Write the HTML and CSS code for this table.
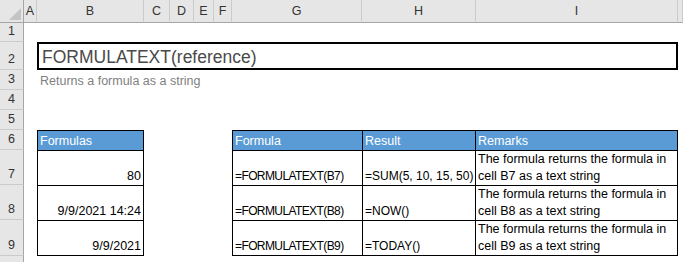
FILE: index.html
```html
<!DOCTYPE html>
<html lang="en">
<head>
  <meta charset="UTF-8">
  <meta name="viewport" content="width=device-width, initial-scale=1.0">
  <title>FORMULATEXT</title>
  <link rel="stylesheet" href="styles.css">
</head>
<body>
  <div class="sheet">
    <!-- column letters -->
    <div class="corner"></div>
    <div class="col-head">A</div>
    <div class="col-head">B</div>
    <div class="col-head">C</div>
    <div class="col-head">D</div>
    <div class="col-head">E</div>
    <div class="col-head">F</div>
    <div class="col-head">G</div>
    <div class="col-head">H</div>
    <div class="col-head">I</div>
    <div class="col-head"></div>

    <!-- row numbers -->
    <div class="row-head">1</div>
    <div class="row-head">2</div>
    <div class="row-head">3</div>
    <div class="row-head">4</div>
    <div class="row-head">5</div>
    <div class="row-head">6</div>
    <div class="row-head">7</div>
    <div class="row-head">8</div>
    <div class="row-head">9</div>
    <div class="row-head"></div>

    <div class="title">FORMULATEXT(reference)</div>
    <div class="subtitle">Returns a formula as a string</div>

    <div class="tbl tbl-values">
      <div class="cell head">Formulas</div>
      <div class="cell num">80</div>
      <div class="cell num">9/9/2021 14:24</div>
      <div class="cell num">9/9/2021</div>
    </div>

    <div class="tbl tbl-formulas">
      <div class="cell head">Formula</div>
      <div class="cell head">Result</div>
      <div class="cell head">Remarks</div>

      <div class="cell code">=FORMULATEXT(B7)</div>
      <div class="cell result">=SUM(5, 10, 15, 50)</div>
      <div class="cell note">The formula returns the formula in cell B7 as a text string</div>

      <div class="cell code">=FORMULATEXT(B8)</div>
      <div class="cell result">=NOW()</div>
      <div class="cell note">The formula returns the formula in cell B8 as a text string</div>

      <div class="cell code">=FORMULATEXT(B9)</div>
      <div class="cell result">=TODAY()</div>
      <div class="cell note">The formula returns the formula in cell B9 as a text string</div>
    </div>
  </div>
</body>
</html>
```

FILE: styles.css
```css
body {
  margin: 0;
  font-family: 'Liberation Sans', Arial, sans-serif;
  font-size: 12.5px;
  background-color: #fff;
  color: #000;
}
.sheet {
  display: grid;
  grid-template-columns: 24px 13px 107px 26px 24px 20px 18px 130px 114px 202px 1fr;
  grid-template-rows: 23px 19px 28px 20px 20px 20px 20px 35px 35px 36px 20px;
  width: 683px;
  height: 262px;
  overflow: hidden;
}

/* headers */
.corner {
  grid-row: 1;
  grid-column: 1;
  position: relative;
  background-color: #e6e6e6;
  border-right: 1px solid #a5a5a5;
  border-bottom: 1px solid #a5a5a5;
}
.corner::after {
  content: '';
  position: absolute;
  right: 2px;
  bottom: 2px;
  width: 12px;
  height: 12px;
  background-color: #c4c4c4;
  clip-path: polygon(100% 0, 100% 100%, 0 100%);
}
.col-head {
  grid-row: 1;
  background-color: #e6e6e6;
  border-right: 1px solid #cbcbcb;
  border-bottom: 1px solid #a5a5a5;
  color: #333;
  display: flex;
  align-items: center;
  justify-content: center;
}
.row-head {
  grid-column: 1;
  background-color: #e6e6e6;
  border-right: 1px solid #a5a5a5;
  border-bottom: 1px solid #cbcbcb;
  color: #333;
  display: flex;
  align-items: flex-end;
  justify-content: center;
  line-height: 17px;
  padding-bottom: 1px;
}

/* title block */
.title {
  grid-column: 3 / 11;
  grid-row: 3;
  border: 2px solid #000;
  display: flex;
  align-items: flex-end;
  padding: 0 3px;
  font-size: 17.5px;
  line-height: 22px;
  color: #4a4a4a;
}
.subtitle {
  grid-column: 3 / 10;
  grid-row: 4;
  display: flex;
  align-items: flex-end;
  padding: 0 3px;
  line-height: 17px;
  color: #7f7f7f;
}

/* tables */
.tbl {
  grid-row: 7 / 11;
  display: grid;
  grid-template-rows: 20px 35px 35px 35px;
  border-left: 1px solid #000;
  border-top: 1px solid #000;
}
.tbl-values {
  grid-column: 3;
  grid-template-columns: 1fr;
}
.tbl-formulas {
  grid-column: 8 / 11;
  grid-template-columns: 130px 113px 1fr;
}
.cell {
  border-right: 1px solid #000;
  border-bottom: 1px solid #000;
  padding: 0 2px;
  display: flex;
  align-items: flex-end;
  line-height: 17px;
  white-space: nowrap;
}
.code {
  font-size: 12px;
  letter-spacing: -0.6px;
}
.result {
  font-size: 12px;
}
.note {
  white-space: normal;
}
.head {
  background-color: #5b9bd5;
  color: #fff;
}
.num {
  justify-content: flex-end;
}
```
